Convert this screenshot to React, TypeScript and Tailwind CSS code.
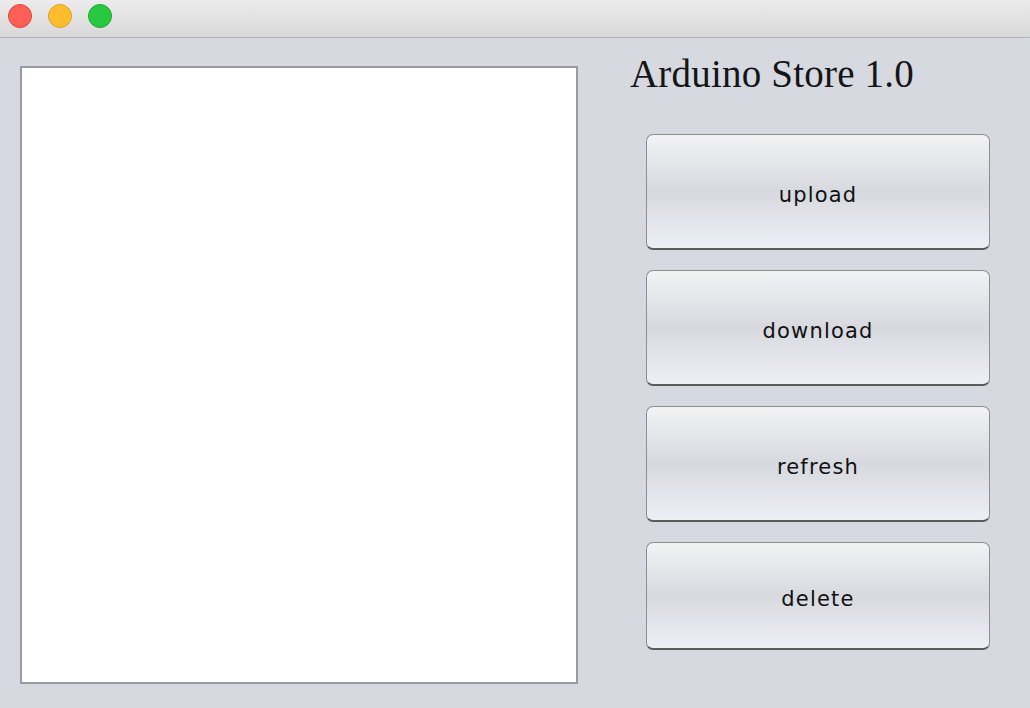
import React from "react";

const BUTTONS = [
  { label: "upload", h: "h-[116px]" },
  { label: "download", h: "h-[116px]" },
  { label: "refresh", h: "h-[116px]" },
  { label: "delete", h: "h-[108px]" },
];

function TrafficLight({ color, ring }: { color: string; ring: string }) {
  return <div className={`w-[24px] h-[24px] rounded-full border ${color} ${ring}`} />;
}

export default function App() {
  return (
    <div className="w-[1030px] h-[708px] bg-[#d6d9e0] flex flex-col overflow-hidden">
      <div className="h-[38px] shrink-0 bg-gradient-to-b from-[#ececec] to-[#d8d8d8] border-b border-[#b4b4b4] flex items-center gap-[16px] pl-[8px] pb-[6px]">
        <TrafficLight color="bg-[#fe5f57]" ring="border-[#e0443e]" />
        <TrafficLight color="bg-[#febc2e]" ring="border-[#dea123]" />
        <TrafficLight color="bg-[#28c840]" ring="border-[#1aab29]" />
      </div>

      <div className="flex flex-1">
        <div className="pl-[20px] pt-[28px]">
          <div className="w-[558px] h-[618px] bg-white border-2 border-[#999aa4]" />
        </div>

        <div className="flex flex-col pl-[52px]">
          <h1
            className="h-[38px] text-[39px] leading-[38px] tracking-[0.2px] text-[#151515] mt-[17px]"
            style={{ fontFamily: '"Liberation Serif", serif' }}
          >
            Arduino Store 1.0
          </h1>
          <div className="flex flex-col gap-[20px] ml-[16px] mt-[41px]">
            {BUTTONS.map((b) => (
              <button
                key={b.label}
                className={`w-[344px] ${b.h} rounded-[7px] border border-[#8e8e8e] border-b-[#5c5c5c] border-b-2 bg-gradient-to-b from-[#f2f3f5] via-[#d7d9df] to-[#eef0f7] pt-[8px] text-[21px] tracking-[1.2px] text-[#111] flex items-center justify-center`}
                style={{ fontFamily: '"DejaVu Sans", sans-serif' }}
              >
                {b.label}
              </button>
            ))}
          </div>
        </div>
      </div>
    </div>
  );
}
